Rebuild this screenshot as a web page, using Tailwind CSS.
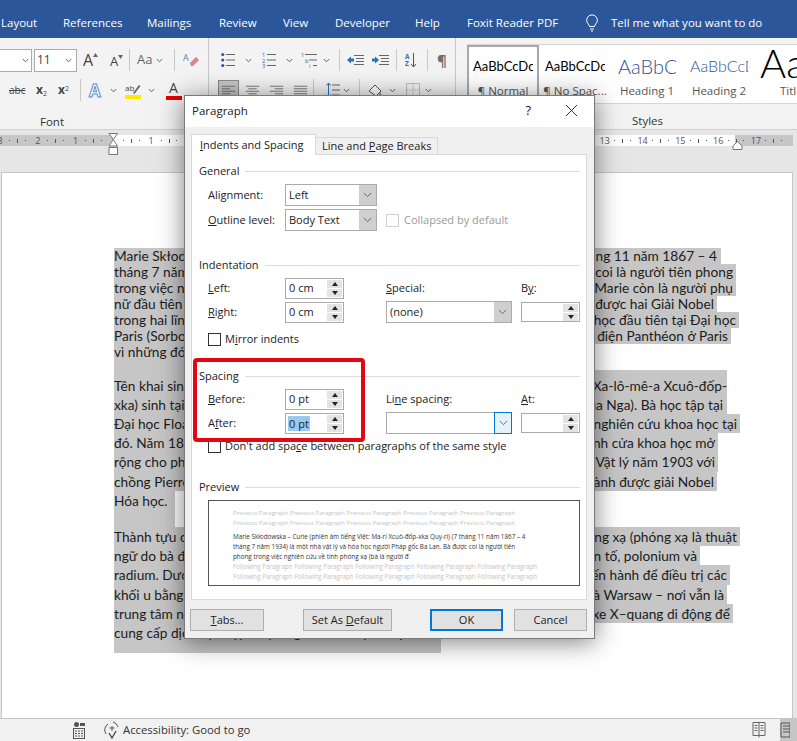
<!DOCTYPE html>
<html lang="vi">
<head>
<meta charset="UTF-8">
<title>Paragraph dialog</title>
<script src="https://cdn.jsdelivr.net/npm/@tailwindcss/browser@4"></script>
</head>
<body class="w-[797px] h-[741px] overflow-hidden relative flex flex-col bg-[#e6e6e6] font-['Open_Sans',sans-serif] text-[#262626]">

<svg class="hidden">
  <symbol id="chev" viewBox="0 0 7 5"><path d="M.8 1l2.7 2.8L6.2 1" fill="none" stroke="#666" stroke-width="1"/></symbol>
  <symbol id="chevbig" viewBox="0 0 11 7"><path d="M1 1l4.500 4.500L10 1" fill="none" stroke="#555" stroke-width="1"/></symbol>
  <symbol id="alignl" viewBox="0 0 18 12"><path d="M1 1.500h16M1 4.500h10M1 7.500h16M1 10.500h10" stroke="#666" fill="none"/></symbol>
  <symbol id="alignc" viewBox="0 0 18 12"><path d="M1 1.500h16M4 4.500h10M1 7.500h16M4 10.500h10" stroke="#666" fill="none"/></symbol>
  <symbol id="alignr" viewBox="0 0 18 12"><path d="M1 1.500h16M7 4.500h10M1 7.500h16M7 10.500h10" stroke="#666" fill="none"/></symbol>
  <symbol id="alignj" viewBox="0 0 18 12"><path d="M1 1.500h16M1 4.500h16M1 7.500h16M1 10.500h16" stroke="#666" fill="none"/></symbol>
</svg>

<!-- Tabs -->
<div class="h-[38px] shrink-0 bg-[#2b579a] text-white text-[11.500px] flex items-center pt-[8px] whitespace-nowrap">
  <span class="ml-[1px] w-[62px]">Layout</span>
  <span class="w-[84px]">References</span>
  <span class="w-[72px]">Mailings</span>
  <span class="w-[64px]">Review</span>
  <span class="w-[52px]">View</span>
  <span class="w-[80px]">Developer</span>
  <span class="w-[52px]">Help</span>
  <span class="w-[118px]">Foxit Reader PDF</span>
  <svg class="w-[14px] h-[18px] mr-[12px]" viewBox="0 0 14 18" fill="none" stroke="#fff" stroke-width="1"><path d="M4.500 12.500c0-2-2.800-3-2.800-6.300a5.300 5.300 0 0 1 10.600 0c0 3.300-2.800 4.300-2.800 6.300zM5 15h4M6 17h2"/></svg>
  <span>Tell me what you want to do</span>
</div>

<!-- Ribbon -->
<div class="h-[92px] shrink-0 bg-[#f3f3f3] border-b border-[#cfcfcf] flex text-[#444]">

  <!-- Font group -->
  <div class="w-[209px] shrink-0 h-[88px] border-r border-[#c8c8c8] flex flex-col pt-[11px]">
    <div class="flex items-center h-[22px]">
      <div class="w-[32px] h-[23px] border border-[#ababab] bg-white flex items-center justify-end pr-[2px] border-l-0"><svg class="w-[7px] h-[5px]"><use href="#chev"/></svg></div>
      <div class="w-[43px] h-[23px] ml-[2px] border border-[#ababab] bg-white flex items-center justify-between pl-[2px] pr-[4px] text-[12px]">11<svg class="w-[7px] h-[5px]"><use href="#chev"/></svg></div>
      <div class="w-[27px] flex justify-center items-start text-[16px] leading-none">A<svg class="w-[5px] h-[4px] mt-[1px]" viewBox="0 0 5 4"><path d="M0 4l2.500-4 2.500 4z" fill="#666"/></svg></div>
      <div class="w-[25px] flex justify-center items-start text-[13px] leading-none pt-[2px]">A<svg class="w-[5px] h-[4px]" viewBox="0 0 5 4"><path d="M0 0l2.500 4 2.500-4z" fill="#666"/></svg></div>
      <div class="w-px h-[22px] bg-[#c8c8c8] mr-[7px]"></div>
      <div class="w-[37px] flex items-center gap-[4px] text-[13px] text-[#666]">Aa<svg class="w-[7px] h-[5px]"><use href="#chev"/></svg></div>
      <div class="w-px h-[22px] bg-[#c8c8c8] mr-[8px]"></div>
      <svg class="w-[16px] h-[15px]" viewBox="0 0 16 15"><path d="M7 10l6-6 3 3-6 6H8z" fill="#e0808c"/><text x="0" y="8" font-size="9" fill="#5a7fb5">A</text></svg>
    </div>
    <div class="flex items-center h-[22px] mt-[8px]">
      <span class="w-[19px] ml-[9px] text-[10px] line-through leading-none mr-[4px]">abc</span>
      <span class="w-[22px] ml-[4px] font-bold text-[12px] leading-none">x<sub class="text-[7px] font-normal">2</sub></span>
      <span class="w-[20px] font-bold text-[12px] leading-none">x<sup class="text-[7px] font-normal">2</sup></span>
      <div class="w-px h-[22px] bg-[#c8c8c8] mr-[8px] ml-[2px]"></div>
      <span class="w-[17px] text-[17px] font-bold leading-none text-white [-webkit-text-stroke:1px_#5a8fd0]">A</span>
      <svg class="w-[7px] h-[5px] ml-[4px]"><use href="#chev"/></svg>
      <div class="w-[17px] ml-[7px] flex flex-col items-center">
        <svg class="w-[16px] h-[13px]" viewBox="0 0 16 13"><text x="0" y="9" font-size="8" fill="#444">ab</text><path d="M8 11l6-8 1.500 1-6 8z" fill="#666"/></svg>
        <div class="w-[16px] h-[4px] bg-[#ffe900]"></div>
      </div>
      <svg class="w-[7px] h-[5px] ml-[7px]"><use href="#chev"/></svg>
      <div class="w-[17px] ml-[10px] flex flex-col items-center leading-none text-[14px]">A<div class="w-[16px] h-[4px] bg-[#e60000] mt-[1px]"></div></div>
    </div>
    <div class="mt-[13px] pl-[40px] text-[11.500px] leading-[16px] text-[#333]">Font</div>
  </div>

  <!-- Paragraph group -->
  <div class="w-[247px] shrink-0 h-[88px] border-r border-[#c8c8c8] pt-[11px]">
    <div class="flex items-center h-[22px]">
      <svg class="w-[14px] h-[16px] ml-[12px]" viewBox="0 0 14 16"><path d="M5 2.500h9M5 8h9M5 13.500h9" stroke="#666"/><circle cx="1.800" cy="2.500" r="1.600" fill="#2b579a"/><circle cx="1.800" cy="8" r="1.600" fill="#2b579a"/><circle cx="1.800" cy="13.500" r="1.600" fill="#2b579a"/></svg>
      <svg class="w-[7px] h-[5px] ml-[10px]"><use href="#chev"/></svg>
      <svg class="w-[15px] h-[16px] ml-[10px]" viewBox="0 0 15 16"><path d="M5 2.500h9M5 8h9M5 13.500h9" stroke="#666"/><text x="0" y="5" font-size="5.500" fill="#2b579a">1</text><text x="0" y="10.500" font-size="5.500" fill="#2b579a">2</text><text x="0" y="16" font-size="5.500" fill="#2b579a">3</text></svg>
      <svg class="w-[7px] h-[5px] ml-[9px]"><use href="#chev"/></svg>
      <svg class="w-[17px] h-[16px] ml-[8px]" viewBox="0 0 17 16"><path d="M4 2.500h12M8 8h8M12 13.500h4" stroke="#666"/><text x="0" y="5" font-size="5.500" fill="#2b579a">1</text><text x="4" y="10.500" font-size="5.500" fill="#2b579a">b</text><text x="8" y="16" font-size="5.500" fill="#2b579a">i</text></svg>
      <svg class="w-[7px] h-[5px] ml-[5px]"><use href="#chev"/></svg>
      <div class="w-px h-[22px] bg-[#c8c8c8] ml-[9px]"></div>
      <svg class="w-[17px] h-[13px] ml-[7px]" viewBox="0 0 17 13"><path d="M7 1.500h10M9 4.500h8M9 7.500h8M7 10.500h10" stroke="#666" fill="none"/><path d="M0 6l4-3.500v2h3v3H4v2z" fill="#2b6fb5"/></svg>
      <svg class="w-[17px] h-[13px] ml-[8px]" viewBox="0 0 17 13"><path d="M7 1.500h10M9 4.500h8M9 7.500h8M7 10.500h10" stroke="#666" fill="none"/><path d="M7 6L3 2.500v2H0v3h3v2z" fill="#2b6fb5"/></svg>
      <div class="w-px h-[22px] bg-[#c8c8c8] ml-[7px]"></div>
      <div class="flex items-center ml-[8px] w-[17px]"><span class="text-[6.500px] leading-[7px] font-bold text-[#2b6fb5]">A<br>Z</span><svg class="w-[7px] h-[15px]" viewBox="0 0 7 15"><path d="M3.500 0v14M1 11l2.500 3L6 11" stroke="#555" fill="none"/></svg></div>
      <div class="w-px h-[22px] bg-[#c8c8c8] ml-[5px]"></div>
      <span class="ml-[9px] text-[15px] font-bold leading-none text-[#707070]">¶</span>
    </div>
    <div class="flex items-center h-[22px] mt-[8px]">
      <div class="w-[21px] h-[21px] ml-[9px] border border-[#8a8a8a] bg-[#c6c6c6] flex items-center justify-center"><svg class="w-[15px] h-[10px]"><use href="#alignl"/></svg></div>
      <svg class="w-[15px] h-[10px] ml-[6px]"><use href="#alignc"/></svg>
      <svg class="w-[15px] h-[10px] ml-[9px]"><use href="#alignr"/></svg>
      <svg class="w-[15px] h-[10px] ml-[9px]"><use href="#alignj"/></svg>
      <div class="w-px h-[22px] bg-[#c8c8c8] ml-[5px]"></div>
      <svg class="w-[14px] h-[16px] ml-[12px]" viewBox="0 0 14 16"><path d="M6 3h8M6 8h8M6 13h8" stroke="#666"/><path d="M2.500 1v14M.5 3.500l2-2.500 2 2.500M.5 12.500l2 2.500 2-2.500" stroke="#2b6fb5" fill="none"/></svg>
      <svg class="w-[7px] h-[5px] ml-[3px]"><use href="#chev"/></svg>
      <div class="w-px h-[22px] bg-[#c8c8c8] ml-[9px]"></div>
      <svg class="w-[15px] h-[15px] ml-[8px]" viewBox="0 0 15 15"><path d="M1 8l6-6 6 6-5 5z" fill="#fff" stroke="#555"/><path d="M12 9c1 1.500 1.500 2 1.500 3a1.200 1.200 0 0 1-2.500 0c0-1 .5-1.500 1-3z" fill="#6d8fbf"/></svg>
      <svg class="w-[7px] h-[5px] ml-[6px]"><use href="#chev"/></svg>
      <svg class="w-[14px] h-[14px] ml-[10px]" viewBox="0 0 14 14"><rect x=".5" y=".5" width="13" height="13" fill="none" stroke="#888" stroke-dasharray="1 1"/><path d="M7 1v12M1 7h12" stroke="#aaa" stroke-dasharray="1 1"/></svg>
      <svg class="w-[7px] h-[5px] ml-[5px]"><use href="#chev"/></svg>
    </div>
  </div>

  <!-- Styles group -->
  <div class="flex-1 min-w-0 h-[92px] pl-[11px] flex flex-col overflow-hidden">
    <div class="h-[60px] mt-[6px] w-[400px] bg-white border-y border-[#d6d6d6] flex whitespace-nowrap">
      <div class="w-[72px] shrink-0 border-2 border-[#a8a8a8] flex flex-col items-center overflow-hidden">
        <div class="h-[36px] w-[60px] overflow-hidden pt-[10px] text-[13px] leading-[18px] text-black font-['Lato',sans-serif]">AaBbCcDc</div>
        <div class="text-[11.500px] text-[#555] leading-[16px]">¶ Normal</div>
      </div>
      <div class="w-[72px] shrink-0 flex flex-col items-center overflow-hidden">
        <div class="h-[38px] w-[60px] overflow-hidden pt-[12px] text-[13px] leading-[18px] text-black font-['Lato',sans-serif]">AaBbCcDc</div>
        <div class="text-[11.500px] text-[#555] leading-[16px]">¶ No Spac...</div>
      </div>
      <div class="w-[72px] shrink-0 flex flex-col items-center overflow-hidden px-[5px]">
        <div class="h-[38px] w-[58px] overflow-hidden pt-[9px] text-[20px] leading-[24px] text-[#2f5496] font-['Lato',sans-serif] font-light">AaBbCc</div>
        <div class="text-[11.500px] text-[#555] leading-[16px]">Heading 1</div>
      </div>
      <div class="w-[72px] shrink-0 flex flex-col items-center overflow-hidden px-[4px]">
        <div class="h-[38px] w-[58px] overflow-hidden pt-[11px] text-[16px] leading-[20px] text-[#2f5496] font-['Lato',sans-serif] font-light">AaBbCcD</div>
        <div class="text-[11.500px] text-[#555] leading-[16px]">Heading 2</div>
      </div>
      <div class="w-[72px] shrink-0 flex flex-col overflow-hidden">
        <div class="h-[38px] pl-[5px] text-[40px] leading-[36px] text-black font-['Lato',sans-serif] font-light">Aa</div>
        <div class="pl-[25px] text-[11.500px] text-[#555] leading-[16px]">Title</div>
      </div>
    </div>
    <div class="mt-[9px] pl-[165px] text-[11.500px] leading-[16px] text-[#333]">Styles</div>
  </div>
</div>

<!-- Ruler -->
<div class="h-[42px] shrink-0 pt-[5px]">
  <div id="ruler" class="h-[11px] w-[793px] flex items-center text-[9px] leading-none text-[#555] overflow-hidden bg-[linear-gradient(to_right,#c6c6c6_113px,#fff_113px,#fff_735px,#c6c6c6_735px)]"></div>
</div>

<!-- Document page -->
<div class="flex-1 min-h-0 ml-px mr-[4px] bg-white border-l border-r border-t border-[#c6c6c6] pt-[75px] pl-[112px] font-['Lato',sans-serif] text-[13.700px] text-[#1c1c1c] whitespace-nowrap overflow-hidden">
  <div class="leading-[16px]">
    <div class="flex justify-between h-[16px] w-[607px] pr-[4px] bg-[#c6c6c6]"><span>Marie Skłodowska</span><span>tháng 11 năm 1867 – 4</span></div>
    <div class="flex justify-between h-[16px] w-[622px] pr-[3px] bg-[#c6c6c6]"><span>tháng 7 năm</span><span>coi là người tiên phong</span></div>
    <div class="flex justify-between h-[16px] w-[622px] pr-[3px] bg-[#c6c6c6]"><span>trong việc nghiên</span><span>Marie còn là người phụ</span></div>
    <div class="flex justify-between h-[16px] w-[603px] pr-[3px] bg-[#c6c6c6]"><span>nữ đầu tiên</span><span>được hai Giải Nobel</span></div>
    <div class="flex justify-between h-[16px] w-[625px] pr-[3px] bg-[#c6c6c6]"><span>trong hai lĩnh</span><span>học đầu tiên tại Đại học</span></div>
    <div class="flex justify-between h-[16px] w-[617px] pr-[3px] bg-[#c6c6c6]"><span>Paris (Sorbonne</span><span>điện Panthéon ở Paris</span></div>
    <div class="h-[16px] w-[300px] bg-[#c6c6c6]">vì những đóng</div>
    <div class="h-[10px] w-[300px] bg-[#c6c6c6]"></div>
  </div>
  <div class="leading-[19.300px]">
    <div class="flex justify-between h-[25px] pt-[6px] w-[613px] bg-[#c6c6c6]"><span>Tên khai sinh</span><span>Xa-lô-mê-a Xcuô-đốp-</span></div>
    <div class="flex justify-between h-[19px] w-[613px] pr-[4px] bg-[#c6c6c6]"><span>xka) sinh tại</span><span>của Nga). Bà học tập tại</span></div>
    <div class="flex justify-between h-[19px] w-[626px] pr-[3px] bg-[#c6c6c6]"><span>Đại học Floating</span><span>nghiên cứu khoa học tại</span></div>
    <div class="flex justify-between h-[19px] w-[604px] pr-[3px] bg-[#c6c6c6]"><span>đó. Năm 18</span><span>cánh cửa khoa học mở</span></div>
    <div class="flex justify-between h-[20px] w-[604px] pr-[3px] bg-[#c6c6c6]"><span>rộng cho phụ</span><span>Vật lý năm 1903 với</span></div>
    <div class="flex justify-between h-[19px] w-[603px] pr-[3px] bg-[#c6c6c6]"><span>chồng Pierre</span><span>thành được giải Nobel</span></div>
    <div class="h-[19px] w-[61px] bg-[#c6c6c6]">Hóa học.</div>
    <div class="h-[17px] w-[61px] bg-[#c6c6c6]"></div>
    <div class="flex justify-between h-[19px] w-[626px] pr-[3px] bg-[#c6c6c6]"><span>Thành tựu của</span><span>phóng xạ (phóng xạ là thuật</span></div>
    <div class="flex justify-between h-[19px] w-[586px] pr-[3px] bg-[#c6c6c6]"><span>ngữ do bà đặt</span><span>nguyên tố, polonium và</span></div>
    <div class="flex justify-between h-[20px] w-[616px] pr-[3px] bg-[#c6c6c6]"><span>radium. Dưới</span><span>tiến hành để điều trị các</span></div>
    <div class="flex justify-between h-[19px] w-[613px] pr-[3px] bg-[#c6c6c6]"><span>khối u bằng</span><span>là Warsaw – nơi vẫn là</span></div>
    <div class="flex justify-between h-[19px] w-[619px] pr-[3px] bg-[#c6c6c6]"><span>trung tâm nghiên</span><span>xe X–quang di động để</span></div>
    <div class="h-[30px] w-[327px] bg-[#c6c6c6]">cung cấp dịch vụ chụp X-quang cho các bệnh viện.</div>
  </div>
</div>

<!-- Status bar -->
<div class="h-[23px] shrink-0 bg-[#f1f1f1] border-t border-[#c6c6c6] flex items-center text-[11.300px] text-[#333] whitespace-nowrap">
  <svg class="w-[12px] h-[18px] ml-[73px]" viewBox="0 0 12 18"><circle cx="3.500" cy="3.500" r="2.500" fill="#555"/><path d="M7 2h5v3H7z" fill="#555"/><rect x=".5" y="7.500" width="11" height="10" fill="none" stroke="#555"/><path d="M2 10h8M2 12.500h8M2 15h8" stroke="#555" stroke-dasharray="2 1"/></svg>
  <svg class="w-[16px] h-[18px] ml-[19px]" viewBox="0 0 16 18" fill="none" stroke="#555"><path d="M4 3a7 7 0 0 0-2 10M9 1a7 7 0 0 1 5 5M8 5v5M5.500 7h5"/><path d="M5 12l3 5 4-7" stroke="#444" stroke-width="1.300"/></svg>
  <span class="ml-[3px] w-[130px]">Accessibility: Good to go</span>
  <svg class="w-[14px] h-[18px] ml-[499px]" viewBox="0 0 14 18" fill="none" stroke="#666"><path d="M1 1.500h12v13H1zM7 1.500v15M2.500 4.500h3M2.500 7h3M2.500 9.500h3M8.500 4.500h3M8.500 7h3M8.500 9.500h3"/></svg>
  <div class="ml-[14px] w-[17px] h-full bg-[#c6c6c6] flex items-center"><svg class="w-[10px] h-[16px]" viewBox="0 0 10 16" fill="none" stroke="#555"><path d="M1 1h9v14H1zM3 4h7M3 7h7M3 10h7"/></svg></div>
</div>

<!-- Ruler indent markers -->
<svg class="absolute left-[108px] top-[133px] w-[11px] h-[22px]" viewBox="0 0 11 22"><path d="M1 .5h8.500L5.300 6.500l4.200 6.500H1l4.300-6.500z" fill="#fff" stroke="#777"/><rect x="1" y="14.500" width="8.500" height="7" fill="#fff" stroke="#777"/></svg>
<svg class="absolute left-[732px] top-[141px] w-[11px] h-[9px]" viewBox="0 0 11 9"><path d="M5.500.5L10 5v3.500H1V5z" fill="#fff" stroke="#777"/></svg>

<!-- Paragraph dialog -->
<div class="absolute left-[184px] top-[95px] w-[411px] h-[544px] bg-[#f0f0f0] border border-[#7a7a7a] shadow-[0_3px_24px_rgba(0,0,0,0.5)] text-[11px] text-[#222] flex flex-col whitespace-nowrap">
  <div class="h-[31px] shrink-0 bg-white flex items-center pl-[7px] pb-[2px] text-[11.500px]">
    <span class="flex-1">Paragraph</span>
    <span class="mr-[34px] text-[13px]">?</span>
    <svg class="w-[13px] h-[13px] mr-[16px]" viewBox="0 0 13 13"><path d="M1 1l11 11M12 1L1 12" stroke="#333" fill="none"/></svg>
  </div>

  <div class="h-[28px] shrink-0 flex items-end pl-[6px] relative z-10">
    <div class="w-[125px] h-[21px] bg-white border border-b-0 border-[#d9d9d9] pl-[8px] leading-[20px]"><u>I</u>ndents and Spacing</div>
    <div class="w-[122px] h-[18px] bg-[#f0f0f0] border border-l-0 border-[#d9d9d9] pl-[6px] leading-[16px]">Line and <u>P</u>age Breaks</div>
  </div>

  <div class="w-[396px] h-[446px] ml-[6px] -mt-px shrink-0 bg-white border border-[#d9d9d9] pl-[7px] pr-[6px] pt-[8px]">
    <!-- General -->
    <div class="h-[16px] flex items-center gap-[6px]"><span>General</span><div class="flex-1 h-px bg-[#dcdcdc]"></div></div>
    <div class="grid grid-cols-[77px_92px_1fr] items-center pl-[9px] mt-[5px] h-[22px]">
      <span>Ali<u>g</u>nment:</span>
      <div class="h-[22px] border border-[#ababab] flex items-center justify-between pl-[3px]">Left<div class="w-[17px] h-[20px] bg-[#cfcfcf] flex items-center justify-center"><svg class="w-[9px] h-[6px]"><use href="#chevbig"/></svg></div></div>
    </div>
    <div class="grid grid-cols-[77px_92px_1fr] items-center pl-[9px] mt-[3px] h-[22px]">
      <span><u>O</u>utline level:</span>
      <div class="h-[22px] border border-[#ababab] flex items-center justify-between pl-[3px]">Body Text<div class="w-[17px] h-[20px] bg-[#cfcfcf] flex items-center justify-center"><svg class="w-[9px] h-[6px]"><use href="#chevbig"/></svg></div></div>
      <div class="flex items-center ml-[9px] text-[#9a9a9a]"><div class="w-[13px] h-[13px] border border-[#cfcfcf] mr-[5px]"></div>Collapsed by default</div>
    </div>

    <!-- Indentation -->
    <div class="h-[16px] flex items-center gap-[6px] mt-[26px]"><span>Indentation</span><div class="flex-1 h-px bg-[#dcdcdc]"></div></div>
    <div class="grid grid-cols-[77px_59px_42px_135px_59px] items-center pl-[9px] mt-[4px] h-[22px]">
      <span><u>L</u>eft:</span>
      <div class="h-[21px] border border-[#ababab] flex items-center justify-between pl-[3px] pr-[1px]">0 cm<div class="w-[15px] flex flex-col gap-px"><div class="h-[8px] bg-[#e3e3e3] flex items-center justify-center"><div class="border-x-[3px] border-x-transparent border-b-[4px] border-b-[#222]"></div></div><div class="h-[8px] bg-[#e3e3e3] flex items-center justify-center"><div class="border-x-[3px] border-x-transparent border-t-[4px] border-t-[#222]"></div></div></div></div>
      <span></span>
      <span><u>S</u>pecial:</span>
      <span>B<u>y</u>:</span>
    </div>
    <div class="grid grid-cols-[77px_59px_42px_135px_59px] items-center pl-[9px] mt-[2px] h-[22px]">
      <span><u>R</u>ight:</span>
      <div class="h-[21px] border border-[#ababab] flex items-center justify-between pl-[3px] pr-[1px]">0 cm<div class="w-[15px] flex flex-col gap-px"><div class="h-[8px] bg-[#e3e3e3] flex items-center justify-center"><div class="border-x-[3px] border-x-transparent border-b-[4px] border-b-[#222]"></div></div><div class="h-[8px] bg-[#e3e3e3] flex items-center justify-center"><div class="border-x-[3px] border-x-transparent border-t-[4px] border-t-[#222]"></div></div></div></div>
      <span></span>
      <div class="w-[126px] h-[22px] border border-[#ababab] flex items-center justify-between pl-[3px]">(none)<div class="w-[17px] h-[20px] bg-[#cfcfcf] flex items-center justify-center"><svg class="w-[9px] h-[6px]"><use href="#chevbig"/></svg></div></div>
      <div class="h-[20px] border border-[#ababab] flex items-center justify-end pr-[1px]"><div class="w-[15px] flex flex-col gap-px"><div class="h-[8px] bg-[#e3e3e3] flex items-center justify-center"><div class="border-x-[3px] border-x-transparent border-b-[4px] border-b-[#222]"></div></div><div class="h-[8px] bg-[#e3e3e3] flex items-center justify-center"><div class="border-x-[3px] border-x-transparent border-t-[4px] border-t-[#222]"></div></div></div></div>
    </div>
    <div class="h-[16px] flex items-center ml-[9px] mt-[8px]"><div class="w-[13px] h-[13px] border border-[#333] mr-[4px]"></div><span>M<u>i</u>rror indents</span></div>

    <!-- Spacing -->
    <div class="h-[16px] flex items-center gap-[6px] mt-[21px]"><span>Spacing</span><div class="flex-1 h-px bg-[#dcdcdc]"></div></div>
    <div class="grid grid-cols-[77px_59px_42px_135px_59px] items-center pl-[9px] mt-[4px] h-[22px]">
      <span><u>B</u>efore:</span>
      <div class="h-[21px] border border-[#ababab] flex items-center justify-between pl-[3px] pr-[1px]">0 pt<div class="w-[15px] flex flex-col gap-px"><div class="h-[8px] bg-[#e3e3e3] flex items-center justify-center"><div class="border-x-[3px] border-x-transparent border-b-[4px] border-b-[#222]"></div></div><div class="h-[8px] bg-[#e3e3e3] flex items-center justify-center"><div class="border-x-[3px] border-x-transparent border-t-[4px] border-t-[#222]"></div></div></div></div>
      <span></span>
      <span>Li<u>n</u>e spacing:</span>
      <span><u>A</u>t:</span>
    </div>
    <div class="grid grid-cols-[77px_59px_42px_135px_59px] items-center pl-[9px] mt-[2px] h-[22px]">
      <span>A<u>f</u>ter:</span>
      <div class="h-[21px] border border-[#ababab] flex items-center justify-between pl-[2px] pr-[1px]"><span class="bg-[#99c9ef] px-px leading-[15px]">0 pt</span><div class="w-[15px] flex flex-col gap-px"><div class="h-[8px] bg-[#e3e3e3] flex items-center justify-center"><div class="border-x-[3px] border-x-transparent border-b-[4px] border-b-[#222]"></div></div><div class="h-[8px] bg-[#e3e3e3] flex items-center justify-center"><div class="border-x-[3px] border-x-transparent border-t-[4px] border-t-[#222]"></div></div></div></div>
      <span></span>
      <div class="w-[126px] h-[22px] border border-[#ababab] flex items-center justify-end"><div class="w-[18px] h-[22px] -mr-px bg-[#e5f1fb] border border-[#0078d7] flex items-center justify-center"><svg class="w-[9px] h-[6px]"><use href="#chevbig"/></svg></div></div>
      <div class="h-[20px] border border-[#ababab] flex items-center justify-end pr-[1px]"><div class="w-[15px] flex flex-col gap-px"><div class="h-[8px] bg-[#e3e3e3] flex items-center justify-center"><div class="border-x-[3px] border-x-transparent border-b-[4px] border-b-[#222]"></div></div><div class="h-[8px] bg-[#e3e3e3] flex items-center justify-center"><div class="border-x-[3px] border-x-transparent border-t-[4px] border-t-[#222]"></div></div></div></div>
    </div>
    <div class="h-[16px] flex items-center ml-[9px] mt-[4px]"><div class="w-[13px] h-[13px] border border-[#333] mr-[4px]"></div><span>Don't add spa<u>c</u>e between paragraphs of the same style</span></div>

    <!-- Preview -->
    <div class="h-[16px] flex items-center gap-[6px] mt-[25px]"><span>Preview</span><div class="flex-1 h-px bg-[#dcdcdc]"></div></div>
    <div class="w-[372px] h-[86px] ml-[9px] mt-[5px] border border-[#555] bg-white pl-[24px] pt-[7px] text-[6.050px] leading-[10px] text-[#c4c4c4] overflow-hidden">
      <div>Previous Paragraph Previous Paragraph Previous Paragraph Previous Paragraph Previous Paragraph</div>
      <div>Previous Paragraph Previous Paragraph Previous Paragraph Previous Paragraph Previous Paragraph</div>
      <div class="mt-[4px] text-[6.300px] text-[#333]">Marie Skłodowska – Curie (phiên âm tiếng Việt: Ma-ri Xcuô-đốp-xka Quy-ri) (7 tháng 11 năm 1867 – 4</div>
      <div class="text-[6.300px] text-[#333]">tháng 7 năm 1934) là một nhà vật lý và hóa học người Pháp gốc Ba Lan. Bà được coi là người tiên</div>
      <div class="text-[6.300px] text-[#333]">phong trong việc nghiên cứu về tính phóng xạ  (bà là người đ</div>
      <div class="text-[6.250px]">Following Paragraph Following Paragraph Following Paragraph Following Paragraph Following Paragraph</div>
      <div class="text-[6.250px]">Following Paragraph Following Paragraph Following Paragraph Following Paragraph Following Paragraph</div>
    </div>
  </div>

  <div class="flex items-center mt-[9px] pl-[5px] text-[11px]">
    <button class="w-[74px] h-[22px] bg-[#e1e1e1] border border-[#adadad]"><u>T</u>abs...</button>
    <button class="w-[89px] h-[22px] ml-[39px] bg-[#e1e1e1] border border-[#adadad]">Set As <u>D</u>efault</button>
    <button class="w-[73px] h-[22px] ml-[38px] bg-[#e1e1e1] border-2 border-[#0078d7]">OK</button>
    <button class="w-[73px] h-[22px] ml-[11px] bg-[#e1e1e1] border border-[#adadad]">Cancel</button>
  </div>
</div>

<!-- Red annotation -->
<div class="absolute left-[193px] top-[358px] w-[172px] h-[84px] border-[4px] border-[#e30613] rounded-[4px]"></div>

<script>
  // ruler cells, one per cm, 0 sits at the page margin
  const ruler = document.getElementById("ruler");
  const labels = [3, 2, 1, "", 1, 2, 3, 4, 5, 6, 7, 8, 9, 10, 11, 12, 13, 14, 15, 16, 17, ""];
  ruler.innerHTML = labels.map((n, i) => `
    <div class="w-[37.800px] shrink-0 flex items-center ${i === 0 ? "-ml-[6px]" : ""}">
      <span class="w-[12px] text-center">${n}</span>
      <span class="flex-1 flex justify-around items-center pr-[2px]">
        <span class="w-px h-px bg-[#555]"></span><span class="w-px h-[4px] bg-[#555]"></span><span class="w-px h-px bg-[#555]"></span>
      </span>
    </div>`).join("");
</script>
</body>
</html>
